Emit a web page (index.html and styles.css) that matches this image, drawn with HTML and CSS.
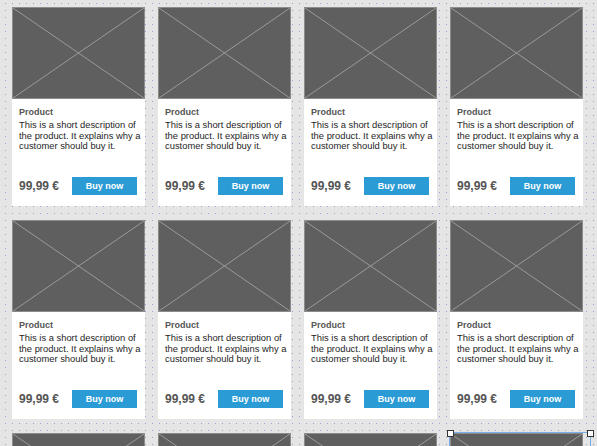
FILE: index.html
```html
<!DOCTYPE html>
<html>
<head>
<meta charset="utf-8">
<link rel="stylesheet" href="styles.css">
</head>
<body>
<div class="grid" id="grid"></div>
<script src="app.js"></script>
</body>
</html>
```
FILE: styles.css
```css
html, body { margin: 0; padding: 0; }
body {
  width: 597px;
  height: 446px;
  overflow: hidden;
  background-color: #e5e5e5;
  background-image: url("data:image/svg+xml,%3Csvg xmlns='http://www.w3.org/2000/svg' width='7' height='7'%3E%3Crect x='0' y='0' width='1' height='1' fill='%239f9fd8'/%3E%3C/svg%3E");
  background-position: 5px 3px;
  font-family: "Liberation Sans", Arial, sans-serif;
}
.grid {
  display: grid;
  grid-template-columns: repeat(4, 133px);
  grid-auto-rows: 199px;
  column-gap: 13px;
  row-gap: 14px;
  padding: 7px 0 0 12px;
}
.card {
  position: relative;
  background: #fff;
  display: flex;
  flex-direction: column;
}
.thumb {
  height: 92px;
  background: #5f5f5f;
  box-sizing: border-box;
  border: 1px solid #8c8c8c;
}
.thumb svg { display: block; width: 100%; height: 100%; }
.body {
  flex: 1;
  display: flex;
  flex-direction: column;
  padding: 8px 3px 11px 7px;
}
.title {
  font-size: 9px;
  line-height: 11px;
  font-weight: bold;
  color: #555;
}
.desc {
  margin-top: 2px;
  font-size: 9.4px;
  line-height: 10.5px;
  color: #1e1e1e;
}
.foot {
  margin-top: auto;
  display: flex;
  align-items: center;
  justify-content: space-between;
  padding-right: 5px;
}
.price {
  font-size: 12px;
  font-weight: bold;
  color: #555;
  line-height: 18px;
}
.buy {
  width: 65px;
  height: 18px;
  background: #2b9bd5;
  color: #fff;
  font-size: 9px;
  font-weight: bold;
  display: flex;
  align-items: center;
  justify-content: center;
}
.selected::after {
  content: "";
  position: absolute;
  left: -1px;
  top: -1px;
  width: 140px;
  height: 199px;
  border: 1px solid #7aaee6;
}
.handle {
  position: absolute;
  width: 5px;
  height: 5px;
  background: #fff;
  border: 1px solid #333;
  z-index: 2;
}
.h-tl { left: -3px; top: -3px; }
.h-tr { left: 137px; top: -3px; }
```
FILE: app.js
```js
var grid = document.getElementById('grid');
var html = '';
for (var i = 0; i < 12; i++) {
  var sel = i === 11;
  var visibleBody = i < 8;
  html += '<div class="card' + (sel ? ' selected' : '') + '">' +
    (sel ? '<span class="handle h-tl"></span><span class="handle h-tr"></span>' : '') +
    '<div class="thumb"><svg viewBox="0 0 100 100" preserveAspectRatio="none">' +
    '<line x1="0" y1="0" x2="100" y2="100" stroke="#9a9a9a" stroke-width="1" vector-effect="non-scaling-stroke"/>' +
    '<line x1="100" y1="0" x2="0" y2="100" stroke="#9a9a9a" stroke-width="1" vector-effect="non-scaling-stroke"/>' +
    '</svg></div>' +
    (visibleBody ?
    '<div class="body"><div class="title">Product</div>' +
    '<div class="desc">This is a short description of the product. It explains why a customer should buy it.</div>' +
    '<div class="foot"><span class="price">99,99 €</span><span class="buy">Buy now</span></div></div>' : '') +
    '</div>';
}
grid.innerHTML = html;
```
